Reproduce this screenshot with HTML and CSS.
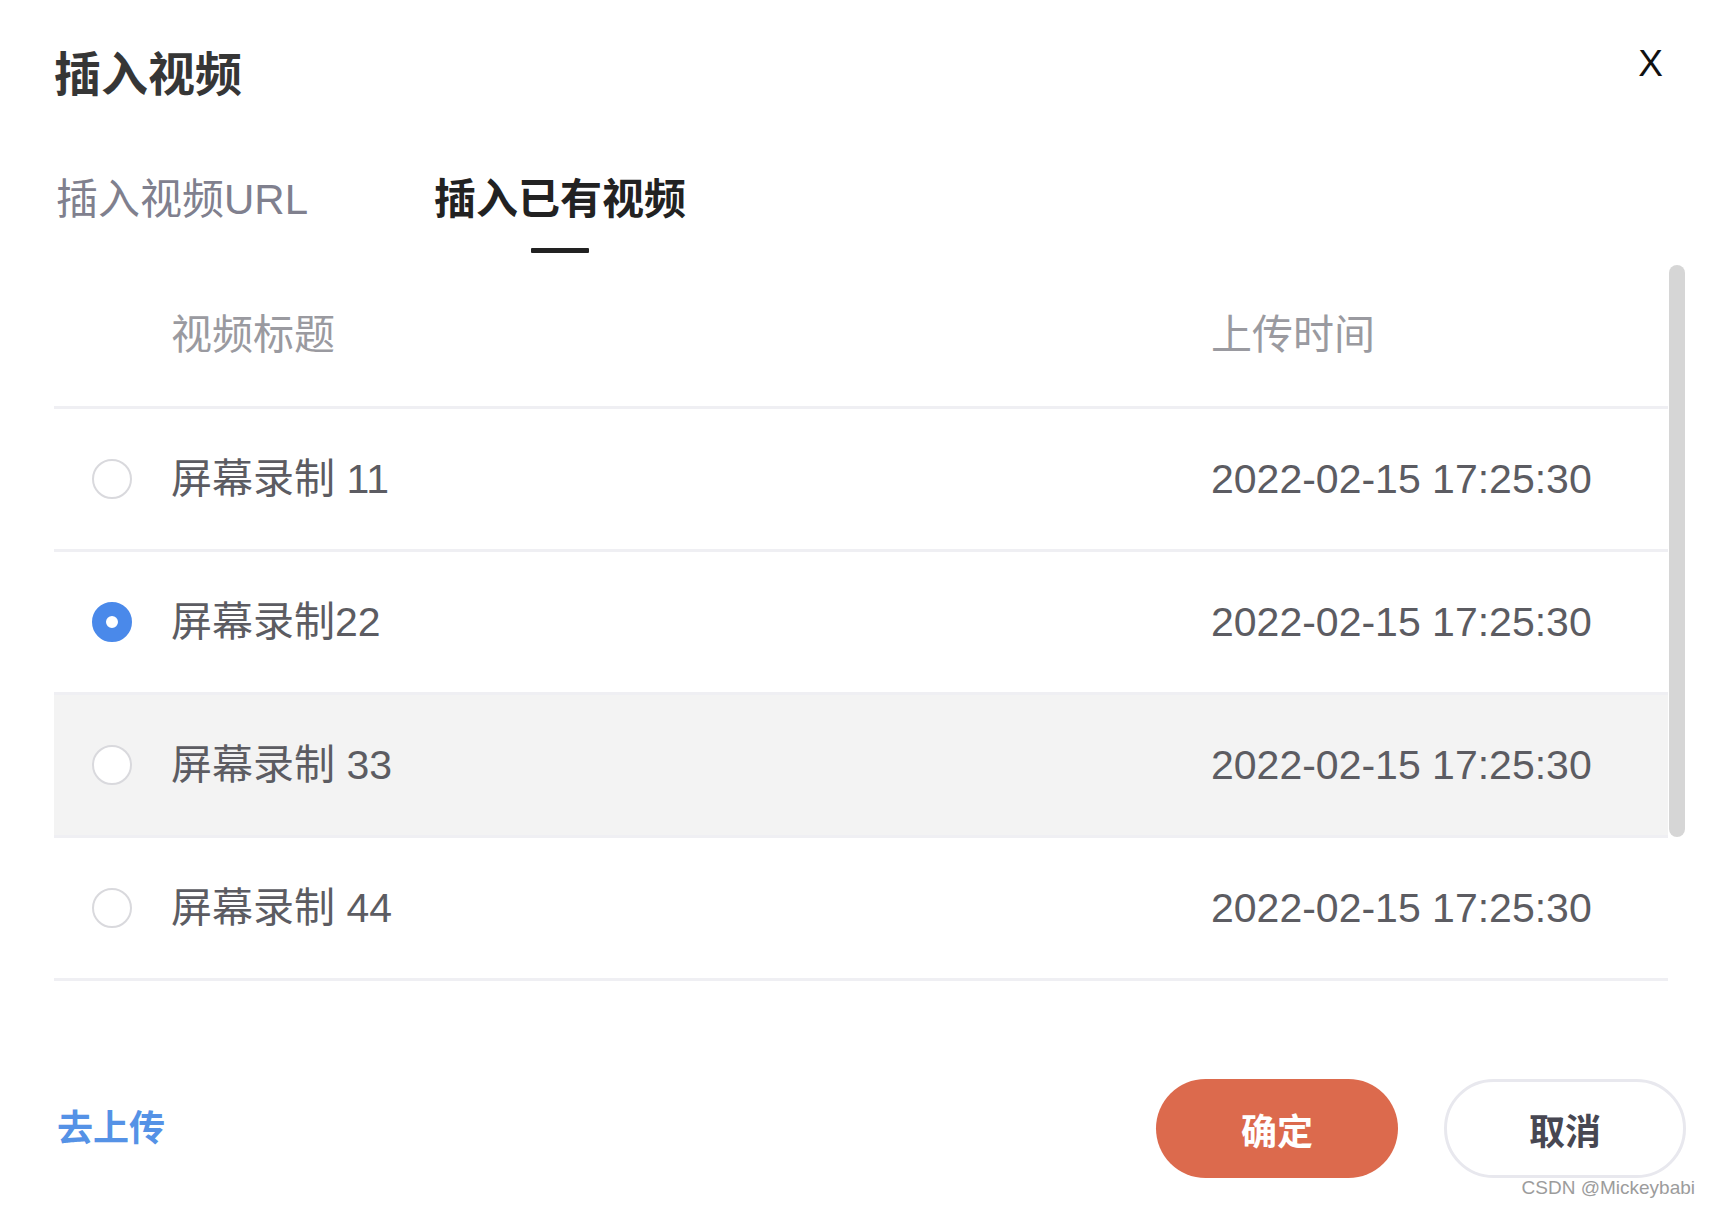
FILE: index.html
```html
<!DOCTYPE html>
<html lang="zh-CN">
<head>
<meta charset="utf-8">
<title>插入视频</title>
<link rel="stylesheet" href="styles.css">
</head>
<body>
<div class="dialog">
  <div class="dialog-head">
    <h1 class="dialog-title">插入视频</h1>
    <span class="close">X</span>
  </div>

  <div class="tabs">
    <div class="tab">插入视频URL</div>
    <div class="tab tab-active">插入已有视频</div>
  </div>

  <div class="list-wrap">
    <div class="list">
      <div class="row row-head">
        <div class="cell-radio"></div>
        <div class="cell-title">视频标题</div>
        <div class="cell-time">上传时间</div>
      </div>
      <div class="row">
        <div class="cell-radio"><span class="radio"></span></div>
        <div class="cell-title">屏幕录制 11</div>
        <div class="cell-time">2022-02-15 17:25:30</div>
      </div>
      <div class="row">
        <div class="cell-radio"><span class="radio radio-checked"></span></div>
        <div class="cell-title">屏幕录制22</div>
        <div class="cell-time">2022-02-15 17:25:30</div>
      </div>
      <div class="row row-hover">
        <div class="cell-radio"><span class="radio"></span></div>
        <div class="cell-title">屏幕录制 33</div>
        <div class="cell-time">2022-02-15 17:25:30</div>
      </div>
      <div class="row">
        <div class="cell-radio"><span class="radio"></span></div>
        <div class="cell-title">屏幕录制 44</div>
        <div class="cell-time">2022-02-15 17:25:30</div>
      </div>
    </div>
    <div class="scroll-track"><div class="scroll-thumb"></div></div>
  </div>

  <div class="dialog-foot">
    <a class="upload-link">去上传</a>
    <div class="actions">
      <button class="btn btn-primary">确定</button>
      <button class="btn btn-default">取消</button>
    </div>
  </div>

  <div class="watermark">CSDN @Mickeybabi</div>
</div>
</body>
</html>
```

FILE: styles.css
```css
html, body {
  margin: 0;
  padding: 0;
  background: #ffffff;
}

body {
  font-family: "Liberation Sans", "Noto Sans CJK SC", sans-serif;
}

.dialog {
  position: relative;
  box-sizing: border-box;
  width: 1710px;
  height: 1208px;
  padding: 45px 22px 0 54px;
}

.dialog-head {
  display: flex;
  justify-content: space-between;
  align-items: flex-start;
}

.dialog-title {
  margin: 6px 0 0 0;
  font-size: 47px;
  line-height: 47px;
  font-weight: 700;
  color: #363636;
}

.close {
  font-size: 37px;
  line-height: 37px;
  color: #111111;
  margin-right: 25px;
  cursor: pointer;
}

.tabs {
  display: flex;
  align-items: flex-start;
  gap: 126px;
  margin-top: 81px;
}

.tab {
  display: flex;
  flex-direction: column;
  align-items: center;
  font-size: 42px;
  line-height: 42px;
  color: #80808e;
}

.tab:first-child {
  margin-left: 2px;
}

.tab::after {
  content: "";
  display: block;
  width: 58px;
  height: 5px;
  margin-top: 27px;
  border-radius: 1px;
  background: transparent;
}

.tab-active {
  color: #222222;
  font-weight: 700;
}

.tab-active::after {
  background: #222222;
}

.list-wrap {
  display: flex;
  margin-top: 12px;
}

.list {
  flex: 1;
}

.row {
  display: flex;
  align-items: center;
  box-sizing: border-box;
  height: 143px;
  border-bottom: 3px solid #efeff3;
  font-size: 41px;
  line-height: 41px;
  color: #5c5c62;
}

.row-head {
  height: 144px;
  color: #9a9aa0;
}

.row-hover {
  background: #f3f3f3;
}

.cell-radio {
  box-sizing: border-box;
  width: 117px;
  padding-left: 38px;
  display: flex;
  align-items: center;
}

.cell-title {
  flex: 1;
}

.cell-time {
  width: 457px;
}

.radio {
  box-sizing: border-box;
  width: 40px;
  height: 40px;
  border: 2px solid #d9d9dd;
  border-radius: 50%;
  background: #ffffff;
}

.radio-checked {
  border: 14px solid #4a89ea;
  background: #ffffff;
}

.scroll-track {
  width: 20px;
}

.scroll-thumb {
  width: 16px;
  height: 572px;
  margin-left: 1px;
  border-radius: 8px;
  background: #d6d6d6;
}

.dialog-foot {
  display: flex;
  justify-content: space-between;
  align-items: center;
  margin-top: 98px;
}

.upload-link {
  margin-left: 3px;
  font-size: 36px;
  line-height: 36px;
  font-weight: 700;
  color: #5592e6;
  cursor: pointer;
}

.actions {
  display: flex;
  gap: 46px;
  margin-right: 2px;
}

.btn {
  box-sizing: border-box;
  width: 242px;
  height: 99px;
  border-radius: 50px;
  font-family: "Liberation Sans", "Noto Sans CJK SC", sans-serif;
  font-size: 36px;
  font-weight: 700;
  cursor: pointer;
}

.btn-primary {
  border: none;
  background: #dc6a4d;
  color: #ffffff;
}

.btn-default {
  border: 3px solid #e8e8ee;
  background: #ffffff;
  color: #474752;
}

.watermark {
  position: absolute;
  right: 15px;
  top: 1178px;
  font-size: 19px;
  line-height: 19px;
  color: #9c9c9c;
  text-shadow: 0 0 2px #ffffff;
}
```
